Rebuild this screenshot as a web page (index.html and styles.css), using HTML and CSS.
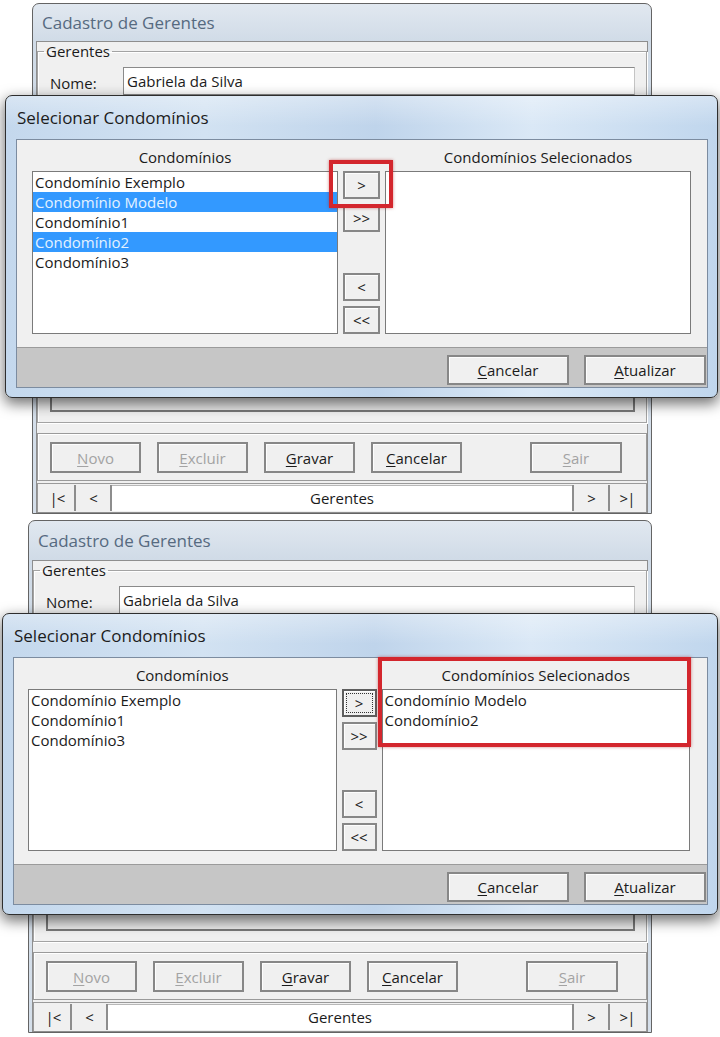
FILE: index.html
```html
<!DOCTYPE html>
<html lang="pt-BR">
<head>
    <meta charset="UTF-8">
    <title>Cadastro de Gerentes</title>
    <link rel="stylesheet" href="styles.css">
</head>
<body>

    <!-- antes: itens marcados na lista da esquerda -->
    <div class="shot shot-a">
        <div class="win">
            <div class="win-title">Cadastro de Gerentes</div>
            <div class="win-body">
                <fieldset class="group">
                    <legend>Gerentes</legend>
                    <div class="field-row">
                        <label>Nome:</label>
                        <div class="edit">Gabriela da Silva</div>
                    </div>
                    <div class="grid-box"></div>
                </fieldset>
                <div class="toolbar">
                    <button class="btn" disabled><u>N</u>ovo</button>
                    <button class="btn" disabled><u>E</u>xcluir</button>
                    <button class="btn"><u>G</u>ravar</button>
                    <button class="btn"><u>C</u>ancelar</button>
                    <button class="btn btn-exit" disabled><u>S</u>air</button>
                </div>
                <div class="nav">
                    <div class="nav-btn">|&lt;</div>
                    <div class="nav-btn">&lt;</div>
                    <div class="nav-field">Gerentes</div>
                    <div class="nav-btn end">&gt;</div>
                    <div class="nav-btn end">&gt;|</div>
                </div>
            </div>
        </div>

        <div class="dlg">
            <div class="dlg-title">Selecionar Condomínios</div>
            <div class="dlg-client">
                <div class="pick">
                    <div class="pick-col">
                        <div class="pick-head">Condomínios</div>
                        <ul class="list">
                            <li>Condomínio Exemplo</li>
                            <li class="sel">Condomínio Modelo</li>
                            <li>Condomínio1</li>
                            <li class="sel">Condomínio2</li>
                            <li>Condomínio3</li>
                        </ul>
                    </div>
                    <div class="pick-btns">
                        <div class="btn-pair">
                            <button class="btn">&gt;</button>
                            <button class="btn">&gt;&gt;</button>
                        </div>
                        <div class="btn-pair">
                            <button class="btn">&lt;</button>
                            <button class="btn">&lt;&lt;</button>
                        </div>
                    </div>
                    <div class="pick-col">
                        <div class="pick-head">Condomínios Selecionados</div>
                        <ul class="list"></ul>
                    </div>
                </div>
                <div class="dlg-foot">
                    <button class="btn"><u>C</u>ancelar</button>
                    <button class="btn"><u>A</u>tualizar</button>
                </div>
            </div>
        </div>

        <div class="mark mark-a"></div>
    </div>

    <!-- depois: itens movidos para a lista da direita -->
    <div class="shot shot-b">
        <div class="win">
            <div class="win-title">Cadastro de Gerentes</div>
            <div class="win-body">
                <fieldset class="group">
                    <legend>Gerentes</legend>
                    <div class="field-row">
                        <label>Nome:</label>
                        <div class="edit">Gabriela da Silva</div>
                    </div>
                    <div class="grid-box"></div>
                </fieldset>
                <div class="toolbar">
                    <button class="btn" disabled><u>N</u>ovo</button>
                    <button class="btn" disabled><u>E</u>xcluir</button>
                    <button class="btn"><u>G</u>ravar</button>
                    <button class="btn"><u>C</u>ancelar</button>
                    <button class="btn btn-exit" disabled><u>S</u>air</button>
                </div>
                <div class="nav">
                    <div class="nav-btn">|&lt;</div>
                    <div class="nav-btn">&lt;</div>
                    <div class="nav-field">Gerentes</div>
                    <div class="nav-btn end">&gt;</div>
                    <div class="nav-btn end">&gt;|</div>
                </div>
            </div>
        </div>

        <div class="dlg">
            <div class="dlg-title">Selecionar Condomínios</div>
            <div class="dlg-client">
                <div class="pick">
                    <div class="pick-col">
                        <div class="pick-head">Condomínios</div>
                        <ul class="list">
                            <li>Condomínio Exemplo</li>
                            <li>Condomínio1</li>
                            <li>Condomínio3</li>
                        </ul>
                    </div>
                    <div class="pick-btns">
                        <div class="btn-pair">
                            <button class="btn focus">&gt;</button>
                            <button class="btn">&gt;&gt;</button>
                        </div>
                        <div class="btn-pair">
                            <button class="btn">&lt;</button>
                            <button class="btn">&lt;&lt;</button>
                        </div>
                    </div>
                    <div class="pick-col">
                        <div class="pick-head">Condomínios Selecionados</div>
                        <ul class="list">
                            <li>Condomínio Modelo</li>
                            <li>Condomínio2</li>
                        </ul>
                    </div>
                </div>
                <div class="dlg-foot">
                    <button class="btn"><u>C</u>ancelar</button>
                    <button class="btn"><u>A</u>tualizar</button>
                </div>
            </div>
        </div>

        <div class="mark mark-b"></div>
    </div>

</body>
</html>
```

FILE: styles.css
```css
* {
  margin: 0;
  padding: 0;
  box-sizing: border-box;
}
body {
  font-family: "Open Sans", "Noto Sans", sans-serif;
  font-size: 15px;
  color: #1b1b1b;
  background-color: #fff;
  width: 720px;
}

.shot {
  position: relative;
  height: 517px;
  padding-top: 3px;
}
.shot-b {
  height: 520px;
}

/* janela de fundo (inativa) */
.win {
  width: 620px;
  margin-left: 32px;
  padding: 0 3px;
  border: 1px solid #646464;
  border-radius: 7px 7px 0 0;
  background: linear-gradient(#e1e8f0, #d0dbe7 38px, #d5dfea);
}
.shot-b .win {
  width: 624px;
  margin-left: 28px;
}
.win-title {
  height: 37px;
  line-height: 37px;
  padding-left: 6px;
  font-size: 17px;
  color: #566a80;
}
.shot-b .win-title {
  height: 39px;
  line-height: 40px;
}
.win-body {
  border: 1px solid #8e8e8e;
  background-color: #f0f0f0;
}

.group {
  border: 1px solid #a3a3a3;
  box-shadow: inset 1px 1px 0 #fff, 1px 1px 0 #fff;
  padding: 7px 11px 10px 12px;
  min-width: 0;
}
.group legend {
  margin-left: -6px;
  padding: 0 2px;
  line-height: 18px;
}
.field-row {
  display: flex;
  align-items: center;
}
.field-row label {
  width: 73px;
  padding-top: 4px;
}
.edit {
  flex: 1;
  height: 28px;
  line-height: 26px;
  padding-left: 3px;
  border: 1px solid #8a8a8a;
  border-right-color: #c4c4c4;
  background-color: #fff;
}
.grid-box {
  margin-top: 10px;
  height: 307px;
  border: 2px solid #787878;
  background-color: #ebebeb;
}

.btn {
  font-family: inherit;
  font-size: 15px;
  color: #1b1b1b;
  background-color: #f0f0f0;
  border: 2px solid #878787;
  box-shadow: inset 1px 1px 0 #fdfdfd;
  cursor: pointer;
}
.btn:disabled {
  color: #a3a3a3;
}
.btn u {
  text-underline-offset: 2px;
}

.toolbar {
  display: flex;
  gap: 16px;
  height: 48px;
  margin-top: 10px;
  padding: 8px 12px 0;
  border: 1px solid #9a9a9a;
  box-shadow: inset 1px 1px 0 #fff;
}
.toolbar .btn {
  width: 91px;
  height: 31px;
}
.toolbar .btn-exit {
  width: 92px;
  margin-left: 52px;
}

.nav {
  display: flex;
  height: 29px;
  margin-top: 2px;
  padding: 1px 2px;
  border: 1px solid #9a9a9a;
  border-bottom: none;
}
.nav-btn {
  width: 36px;
  display: flex;
  align-items: center;
  justify-content: center;
  letter-spacing: -1px;
  border-right: 2px solid #8d8d8d;
  background-color: #f0f0f0;
}
.nav-btn.end {
  border-right: none;
  border-left: 2px solid #8d8d8d;
}
.nav-field {
  flex: 1;
  text-align: center;
  line-height: 25px;
  background-color: #fff;
  border-top: 1px solid #b8b8b8;
}

/* dialogo ativo por cima */
.dlg {
  position: absolute;
  left: 5px;
  top: 95px;
  width: 713px;
  height: 303px;
  display: flex;
  flex-direction: column;
  padding: 0 9px 9px 10px;
  border: 1px solid #2e2e2e;
  border-radius: 7px;
  background:
    linear-gradient(180deg, rgba(255, 255, 255, 0.35), rgba(255, 255, 255, 0) 30px),
    linear-gradient(90deg, #c4d8ed 0%, #d2e2f2 28%, #bfd4eb 52%, #dae8f6 74%, #c0d6ed 100%);
  box-shadow: 0 5px 14px 1px rgba(0, 0, 0, 0.55);
}
.shot-b .dlg {
  left: 2px;
  top: 96px;
  width: 716px;
  height: 302px;
}
.dlg-title {
  height: 43px;
  line-height: 43px;
  padding-left: 1px;
  font-size: 17px;
  color: #1c1c1c;
}
.dlg-client {
  flex: 1;
  display: flex;
  flex-direction: column;
  border: 1px solid #7c8ca0;
  background-color: #f0f0f0;
}

.pick {
  flex: 1;
  display: flex;
  gap: 5px;
  padding: 8px 16px 13px 15px;
}
.shot-b .pick {
  padding: 8px 17px 13px 14px;
}
.pick-col {
  flex: 1;
  display: flex;
  flex-direction: column;
}
.pick-head {
  text-align: center;
  line-height: 18px;
  margin-bottom: 5px;
}
.list {
  flex: 1;
  list-style: none;
  border: 1px solid #7a7a7a;
  background-color: #fff;
}
.list li {
  height: 20px;
  line-height: 20px;
  padding-left: 2px;
  white-space: nowrap;
}
.list li.sel {
  background-color: #3399ff;
  color: #e4f2ff;
}
.pick-btns {
  width: 37px;
  display: flex;
  flex-direction: column;
  justify-content: space-between;
  padding-top: 23px;
}
.shot-b .pick-btns {
  width: 35px;
}
.btn-pair {
  display: flex;
  flex-direction: column;
  gap: 5px;
}
.btn-pair .btn {
  height: 28px;
}
.btn.focus {
  border-color: #5e5e5e;
  outline: 1px dotted #333;
  outline-offset: -5px;
}

.dlg-foot {
  height: 40px;
  display: flex;
  justify-content: flex-end;
  gap: 15px;
  padding: 7px 1px 0 0;
  border-top: 1px solid #9b9b9b;
  background-color: #c6c6c6;
}
.dlg-foot .btn {
  width: 122px;
  height: 30px;
}

/* destaque vermelho do tutorial */
.mark {
  position: absolute;
  border: 4px solid #d3262d;
  box-shadow: 0 0 3px rgba(170, 20, 20, 0.5);
}
.mark-a {
  left: 329px;
  top: 160px;
  width: 64px;
  height: 48px;
}
.mark-b {
  left: 378px;
  top: 140px;
  width: 313px;
  height: 90px;
}
```
